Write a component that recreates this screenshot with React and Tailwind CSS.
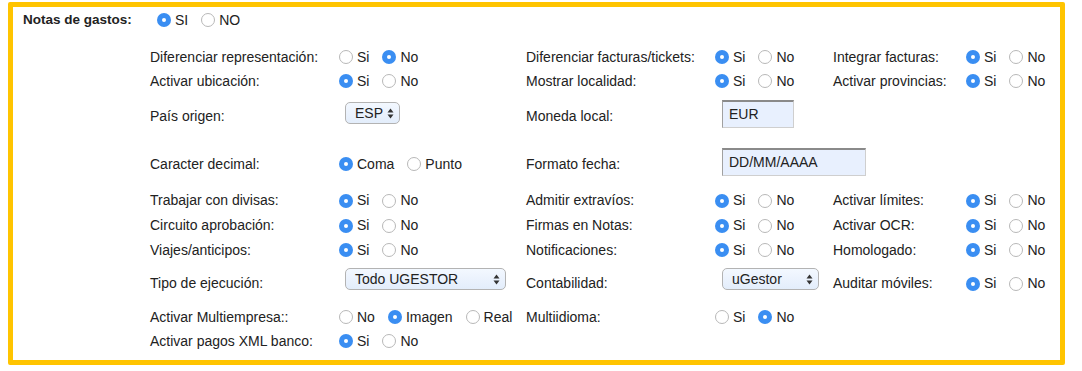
import React from "react";

const font = { fontFamily: '"Liberation Sans", Arial, Helvetica, sans-serif' };

function Radio({ checked }) {
  return checked ? (
    <span className="w-[14px] h-[14px] rounded-full bg-[#3a8ef2] flex items-center justify-center shrink-0">
      <span className="w-[4px] h-[4px] rounded-full bg-white" />
    </span>
  ) : (
    <span className="w-[14px] h-[14px] rounded-full border border-[#b8b8b8] bg-white shrink-0" />
  );
}

function Options({ items, value }) {
  return (
    <div className="flex items-center">
      {items.map((it) => (
        <label key={it} className="flex items-center mr-[13px]">
          <Radio checked={it === value} />
          <span className="ml-[4px]">{it}</span>
        </label>
      ))}
    </div>
  );
}

function SiNo({ v = "Si" }) {
  return <Options items={["Si", "No"]} value={v} />;
}

function Select({ value, w, className = "" }) {
  return (
    <div
      className={`h-[22px] shrink-0 rounded-[5px] border border-[#b3b3b3] bg-gradient-to-b from-[#f3f8ff] to-[#e3edfb] flex items-center justify-between pl-[9px] pr-[5px] ${w} ${className}`}
    >
      <span className="leading-none">{value}</span>
      <svg width="7" height="11" viewBox="0 0 7 11">
        <path d="M3.5 0.5 L6.5 4.5 L0.5 4.5 Z" fill="#333" />
        <path d="M3.5 10.5 L6.5 6.5 L0.5 6.5 Z" fill="#333" />
      </svg>
    </div>
  );
}

function Input({ value, w, className = "" }) {
  return (
    <div
      className={`h-[28px] shrink-0 bg-[#e8f0fe] border border-[#cfcfcf] border-t-[#8a8a8a] border-l-[#a0a0a0] border-t-2 flex items-center pl-[6px] ${w} ${className}`}
    >
      {value}
    </div>
  );
}

function Row({ h, children }) {
  return <div className={`flex items-center ${h}`}>{children}</div>;
}

const L1 = ({ children }) => <div className="w-[189px] shrink-0 whitespace-nowrap">{children}</div>;
const C1 = ({ children }) => <div className="w-[187px] shrink-0 flex items-center">{children}</div>;
const L2 = ({ children }) => <div className="w-[189px] shrink-0 whitespace-nowrap">{children}</div>;
const C2 = ({ children }) => <div className="w-[118px] shrink-0 flex items-center">{children}</div>;
const L3 = ({ children }) => <div className="w-[133px] shrink-0 whitespace-nowrap">{children}</div>;
const C3 = ({ children }) => <div className="flex-1 flex items-center">{children}</div>;

export default function App() {
  return (
    <div className="w-[1082px] h-[371px] bg-white text-[14px] text-[#222] overflow-hidden" style={font}>
      <div className="ml-[8px] mt-[2px] w-[1057px] h-[363px] border-[5px] border-[#ffc400] rounded-[2px]">
        <div className="flex items-center h-[26px] px-[10px]">
          <div className="w-[134px] font-bold text-[13.5px] whitespace-nowrap">Notas de gastos:</div>
          <Options items={["SI", "NO"]} value="SI" />
        </div>

        <div className="ml-[137px] mt-[12px]">
          <Row h="h-[24px]">
            <L1>Diferenciar representación:</L1>
            <C1><SiNo v="No" /></C1>
            <L2>Diferenciar facturas/tickets:</L2>
            <C2><SiNo /></C2>
            <L3>Integrar facturas:</L3>
            <C3><SiNo /></C3>
          </Row>
          <Row h="h-[24px]">
            <L1>Activar ubicación:</L1>
            <C1><SiNo /></C1>
            <L2>Mostrar localidad:</L2>
            <C2><SiNo /></C2>
            <L3>Activar provincias:</L3>
            <C3><SiNo /></C3>
          </Row>
          <Row h="h-[47px]">
            <L1>País origen:</L1>
            <C1><Select value="ESP" w="w-[55px]" className="ml-[6px] mb-[7px]" /></C1>
            <L2>Moneda local:</L2>
            <C2><Input value="EUR" w="w-[72px]" className="ml-[7px] mb-[5px]" /></C2>
          </Row>
          <Row h="h-[48px]">
            <L1>Caracter decimal:</L1>
            <C1><Options items={["Coma", "Punto"]} value="Coma" /></C1>
            <L2>Formato fecha:</L2>
            <C2><Input value="DD/MM/AAAA" w="w-[144px]" className="ml-[7px] mb-[4px]" /></C2>
          </Row>
          <Row h="h-[25px]">
            <L1>Trabajar con divisas:</L1>
            <C1><SiNo /></C1>
            <L2>Admitir extravíos:</L2>
            <C2><SiNo /></C2>
            <L3>Activar límites:</L3>
            <C3><SiNo /></C3>
          </Row>
          <Row h="h-[25px]">
            <L1>Circuito aprobación:</L1>
            <C1><SiNo /></C1>
            <L2>Firmas en Notas:</L2>
            <C2><SiNo /></C2>
            <L3>Activar OCR:</L3>
            <C3><SiNo /></C3>
          </Row>
          <Row h="h-[24px]">
            <L1>Viajes/anticipos:</L1>
            <C1><SiNo /></C1>
            <L2>Notificaciones:</L2>
            <C2><SiNo /></C2>
            <L3>Homologado:</L3>
            <C3><SiNo /></C3>
          </Row>
          <Row h="h-[43px]">
            <L1>Tipo de ejecución:</L1>
            <C1><Select value="Todo UGESTOR" w="w-[161px]" className="ml-[6px] mb-[9px]" /></C1>
            <L2>Contabilidad:</L2>
            <C2><Select value="uGestor" w="w-[97px]" className="ml-[7px] mb-[9px]" /></C2>
            <L3>Auditar móviles:</L3>
            <C3><SiNo /></C3>
          </Row>
          <Row h="h-[24px]">
            <L1>Activar Multiempresa::</L1>
            <C1><Options items={["No", "Imagen", "Real"]} value="Imagen" /></C1>
            <L2>Multiidioma:</L2>
            <C2><SiNo v="No" /></C2>
          </Row>
          <Row h="h-[24px]">
            <L1>Activar pagos XML banco:</L1>
            <C1><SiNo /></C1>
          </Row>
        </div>
      </div>
    </div>
  );
}
